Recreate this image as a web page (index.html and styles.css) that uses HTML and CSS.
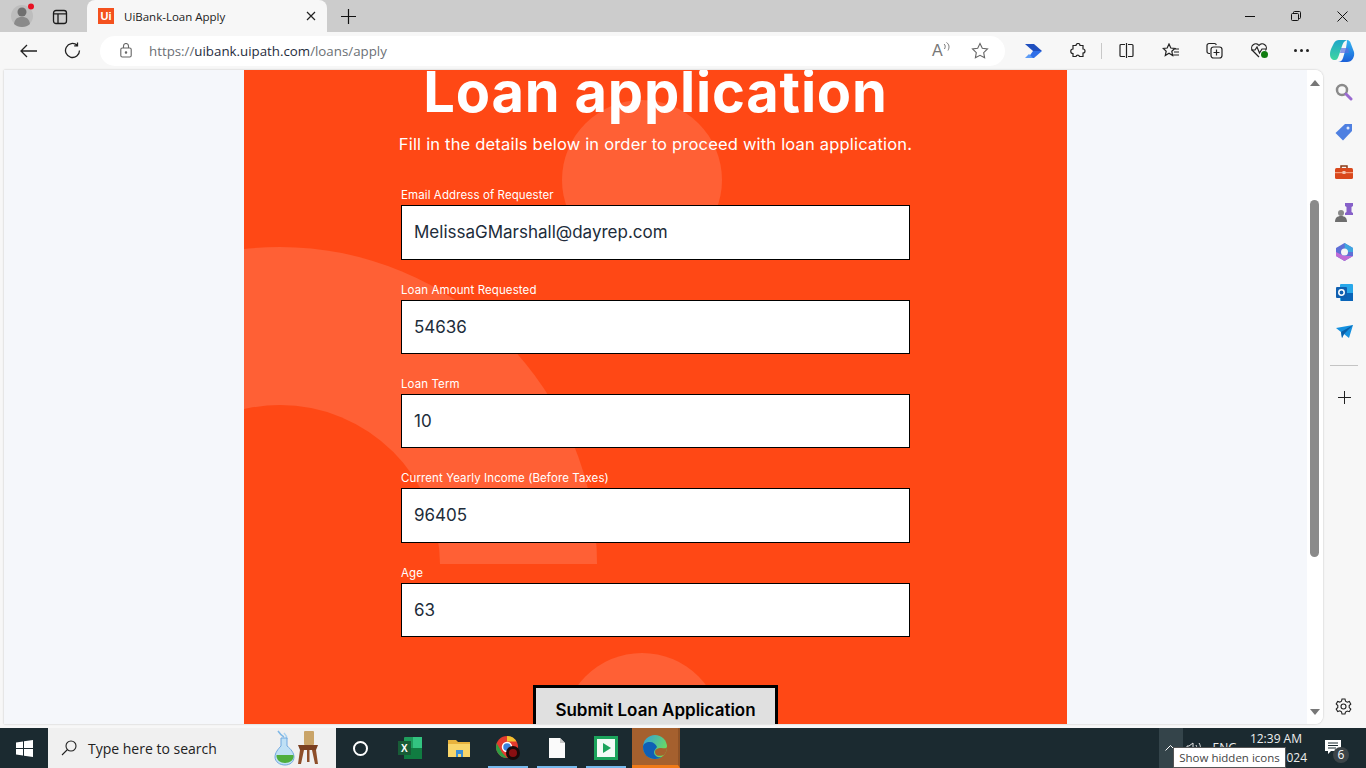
FILE: index.html
```html
<!DOCTYPE html>
<html lang="en">
<head>
  <meta charset="UTF-8">
  <meta name="viewport" content="width=device-width, initial-scale=1.0">
  <title>UiBank-Loan Apply</title>
  <link rel="stylesheet" href="styles.css">
</head>
<body>
  <!-- tab strip -->
  <div class="tabstrip">
    <div class="avatar">
      <svg width="26" height="26" viewBox="0 0 26 26"><circle cx="11" cy="13" r="11" fill="#bdbdbd"/><circle cx="11" cy="9" r="4.500" fill="#707070"/><path d="M3 21c1-6 4-7 8-7s7 1 8 7c-2 2-5 3-8 3s-6-1-8-3z" fill="#8a8a8a"/><circle cx="20" cy="3.500" r="3" fill="#e81123"/></svg>
    </div>
    <div class="tab-actions">
      <svg width="16" height="16" viewBox="0 0 16 16" fill="none" stroke="#1a1a1a" stroke-width="1.300"><rect x="1.500" y="1.500" width="13" height="13" rx="2.500"/><path d="M1.500 4.800h13M6 4.800v9.700"/></svg>
    </div>
    <div class="tab">
      <span class="tab-logo">Ui</span>
      <span class="tab-title">UiBank-Loan Apply</span>
      <svg width="10" height="10" viewBox="0 0 10 10" stroke="#222" stroke-width="1.200"><path d="M1 1l8 8M9 1l-8 8"/></svg>
    </div>
    <svg class="new-tab" width="15" height="15" viewBox="0 0 15 15" stroke="#111" stroke-width="1.200"><path d="M7.500 0v15M0 7.500h15"/></svg>
    <div class="window-btns">
      <svg width="10" height="10" viewBox="0 0 10 10" stroke="#111"><path d="M0 5.500h10"/></svg>
      <svg width="10" height="10" viewBox="0 0 10 10" fill="none" stroke="#111"><rect x="0.500" y="2.500" width="7" height="7" rx="1"/><path d="M2.500 2.500v-1a1 1 0 0 1 1-1h5a1 1 0 0 1 1 1v5a1 1 0 0 1-1 1h-1"/></svg>
      <svg width="11" height="11" viewBox="0 0 11 11" stroke="#111"><path d="M0.500 0.500l10 10M10.500 0.500l-10 10"/></svg>
    </div>
  </div>

  <!-- address bar -->
  <div class="toolbar">
    <svg class="nav-back" width="17" height="14" viewBox="0 0 17 14" fill="none" stroke="#222" stroke-width="1.300"><path d="M17 7H1M7 1L1 7l6 6"/></svg>
    <svg class="nav-reload" width="17" height="17" viewBox="0 0 17 17" fill="none" stroke="#222" stroke-width="1.300"><path d="M15.500 8.500a7 7 0 1 1-2.300-5.200M13.500 0.500v3.300h-3.300"/></svg>
    <div class="addressbar">
      <svg width="12" height="15" viewBox="0 0 12 15" fill="none" stroke="#666" stroke-width="1.100"><rect x="0.800" y="5" width="10.400" height="9" rx="1.500"/><path d="M3.500 5V3a2.500 2.500 0 0 1 5 0v2"/><circle cx="6" cy="9.500" r="0.700" fill="#666"/></svg>
      <span class="url"><span class="url-dim">https://</span>uibank.uipath.com<span class="url-dim">/loans/apply</span></span>
      <span class="read-aloud">A<svg width="7" height="9" viewBox="0 0 7 9" fill="none" stroke="#777"><path d="M1 2c1.500 1 1.500 3 .5 5M3.500 0.500c3 2 3 5 1.500 8"/></svg></span>
      <svg width="18" height="18" viewBox="0 0 18 18" fill="none" stroke="#666" stroke-width="1.100"><path d="M9 1.500l2.300 4.800 5.200.7-3.800 3.600.9 5.200L9 13.300l-4.600 2.500.9-5.200L1.500 7l5.200-.7z"/></svg>
    </div>
    <div class="toolbar-icons">
      <svg class="ti-automate" width="17" height="14" viewBox="0 0 17 14"><path d="M3 14l5-7h9l-8 7z" fill="#2f6fe8"/><path d="M8 7L0 0h9l8 7z" fill="#1f4fbf"/><path d="M0 14l4-4 4 4z" fill="#5c9bf5"/></svg>
      <svg class="ti-ext" width="16" height="16" viewBox="0 0 16 16" fill="none" stroke="#222" stroke-width="1.200"><path d="M6 2.500a2 2 0 0 1 4 0h3v3.500a2 2 0 0 1 0 4v3.500H9.500a1.800 1.800 0 0 0-3.500 0H3v-3a2 2 0 0 1 0-4.500v-3.500z"/></svg>
      <span class="ti-sep"></span>
      <svg class="ti-split" width="15" height="15" viewBox="0 0 15 15" fill="none" stroke="#222" stroke-width="1.200"><path d="M6 1.500H2a1 1 0 0 0-1 1v10a1 1 0 0 0 1 1h4M9 1.500h4a1 1 0 0 1 1 1v10a1 1 0 0 1-1 1H9M7.500 0v15"/></svg>
      <svg class="ti-favs" width="17" height="16" viewBox="0 0 17 16" fill="none" stroke="#222" stroke-width="1.200"><path d="M7 1l1.800 4 4 .4-3 2.800.8 4.300L7 10.300l-3.700 2.200.9-4.300-3-2.800 4-.4zM12 6h5M12 9h5M11 12h6"/></svg>
      <svg class="ti-coll" width="17" height="17" viewBox="0 0 17 17" fill="none" stroke="#222" stroke-width="1.200"><path d="M4 11.500H3a2 2 0 0 1-2-2V3.500a2 2 0 0 1 2-2h5.500a2 2 0 0 1 1.800 1.500"/><rect x="5" y="5" width="11" height="11" rx="2.500"/><path d="M10.500 7.500v6M7.500 10.500h6"/></svg>
      <svg class="ti-health" width="19" height="17" viewBox="0 0 19 17" fill="none" stroke="#222" stroke-width="1.200"><path d="M9 15L2.500 8.500a4 4 0 0 1 6.500-5 4 4 0 0 1 6.500 5"/><path d="M1 8h4l2-3 2.500 6L12 7h4"/><circle cx="14.500" cy="12.500" r="3.500" fill="#107c10" stroke="none"/></svg>
      <span class="ti-more"><i></i><i></i><i></i></span>
      <svg class="ti-copilot" width="25" height="24" viewBox="0 0 25 24">
        <defs>
          <linearGradient id="copilotA" x1="0" y1="0" x2="0" y2="1"><stop offset="0" stop-color="#1fa6c9"/><stop offset="1" stop-color="#3ed6a0"/></linearGradient>
          <linearGradient id="copilotB" x1="0" y1="0" x2="0" y2="1"><stop offset="0" stop-color="#35b6f2"/><stop offset="1" stop-color="#1a5fd8"/></linearGradient>
        </defs>
        <path d="M9 1h8c-3 1-4 3-5 6l-3 9c-1 3-2 5-4 5-3 0-5-2-5-6 0-3 1-5 2-7l2-4c1-2 3-3 5-3z" fill="url(#copilotA)"/>
        <path d="M17 1c2 0 3 1 4 4l3 8c1 5-2 10-7 10H8c2 0 4-1 5-4l3-10c.5-3 1-6 1-8z" fill="url(#copilotB)"/>
        <path d="M11 9h7l1 5h-9z" fill="#5a6fe0" opacity="0.700"/>
      </svg>
    </div>
  </div>

  <!-- browser content + edge sidebar -->
  <div class="browser">
    <div class="viewport">
      <div class="page">
        <div class="panel">
          <div class="deco deco-circle-top"></div>
          <div class="deco-arch"><div class="deco-ring"></div></div>
          <div class="deco deco-circle-bottom"></div>

          <div class="panel-inner">
            <h1>Loan application</h1>
            <p class="lead">Fill in the details below in order to proceed with loan application.</p>

            <form class="loan-form">
              <label for="email">Email Address of Requester</label>
              <input type="text" id="email" class="tall" value="MelissaGMarshall@dayrep.com">

              <label for="amount">Loan Amount Requested</label>
              <input type="text" id="amount" value="54636">

              <label for="term">Loan Term</label>
              <input type="text" id="term" value="10">

              <label for="income">Current Yearly Income (Before Taxes)</label>
              <input type="text" id="income" class="tall" value="96405">

              <label for="age">Age</label>
              <input type="text" id="age" value="63">

              <button type="button">Submit Loan Application</button>
            </form>
          </div>
        </div>
      </div>
      <div class="scrollbar">
        <span class="arrow-up"></span>
        <span class="thumb"></span>
        <span class="arrow-down"></span>
      </div>
    </div>

    <div class="sidebar">
      <div class="side-item"><svg width="18" height="18" viewBox="0 0 18 18" fill="none"><circle cx="7" cy="7" r="5" stroke="#8a8a8a" stroke-width="2.500"/><path d="M11 11l5 5" stroke="#9a6ad0" stroke-width="3" stroke-linecap="round"/></svg></div>
      <div class="side-item"><svg width="18" height="18" viewBox="0 0 18 18"><path d="M10 1h7v7l-9 9.500L0.500 10z" fill="#4f80e1"/><circle cx="13" cy="5" r="1.500" fill="#dfe8fa"/></svg></div>
      <div class="side-item"><svg width="18" height="14" viewBox="0 0 18 14"><path d="M6 3V1h6v2" fill="none" stroke="#8a3a16" stroke-width="1.500"/><rect y="3" width="18" height="11" rx="1.500" fill="#d9481c"/><rect y="7" width="18" height="1.200" fill="#f4a080"/><rect x="7.500" y="6" width="3" height="3" fill="#f3c3ae"/></svg></div>
      <div class="side-item"><svg width="18" height="19" viewBox="0 0 18 19"><circle cx="6" cy="10" r="3" fill="#8a8a8a"/><path d="M0 19c0-4 2-6 6-6s6 2 6 6z" fill="#6e6e6e"/><path d="M10 0h8v3l-1.500 1v5l1.500 1v2h-8v-2l1.500-1V4L10 3z" fill="#8761c9"/></svg></div>
      <div class="side-item"><svg width="17" height="18" viewBox="0 0 17 18"><path d="M8.500 0L17 5v8l-8.500 5L0 13V5z" fill="#5f6fd6"/><path d="M8.500 0L17 5v4H9z" fill="#3fa6e0"/><path d="M0 9l8 4h9l-8.500 5L0 13z" fill="#c06bd6"/><circle cx="8.500" cy="9" r="3.500" fill="#f5f5f5"/></svg></div>
      <div class="side-item"><svg width="17" height="17" viewBox="0 0 17 17"><rect x="4" y="0" width="13" height="17" rx="1" fill="#28a8ea"/><path d="M5 9h12v8H5z" fill="#0a64b8"/><rect x="0" y="3" width="11" height="11" rx="1" fill="#0f5fb0"/><circle cx="5.500" cy="8.500" r="2.700" fill="none" stroke="#fff" stroke-width="1.500"/></svg></div>
      <div class="side-item"><svg width="17" height="14" viewBox="0 0 17 14"><path d="M0 3l17-3-4 13-5-4-2 4-1-6z" fill="#1490df"/><path d="M5 7l12-7-9 9-2 4z" fill="#0a5ea8"/></svg></div>
      <span class="side-sep"></span>
      <div class="side-item side-add"><svg width="13" height="13" viewBox="0 0 13 13" stroke="#222"><path d="M6.500 0v13M0 6.500h13"/></svg></div>
      <svg class="side-gear" width="17" height="17" viewBox="0 0 17 17" fill="none" stroke="#222" stroke-width="1.100"><circle cx="8.500" cy="8.500" r="2.500"/><path d="M7 1h3l.5 2.200 1.700 1 2.100-.7 1.500 2.600-1.600 1.500v2l1.600 1.500-1.500 2.600-2.100-.7-1.700 1L10 16H7l-.5-2.200-1.700-1-2.100.7L1.200 11l1.600-1.500v-2L1.200 6l1.500-2.600 2.100.7 1.700-1z"/></svg>
    </div>
  </div>

  <!-- windows taskbar -->
  <div class="taskbar">
    <div class="start">
      <svg width="17" height="17" viewBox="0 0 17 17" fill="#fff"><path d="M0 2.500l7-1V8H0zM8 1.300L17 0v8H8zM0 9h7v6.500l-7-1zM8 9h9v8l-9-1.300z"/></svg>
    </div>
    <div class="search">
      <svg width="16" height="16" viewBox="0 0 16 16" fill="none" stroke="#222" stroke-width="1.100"><circle cx="10" cy="6" r="5"/><path d="M6.500 9.500L1 15"/></svg>
      <span>Type here to search</span>
      <svg class="search-art" width="44" height="36" viewBox="0 0 44 36">
        <path d="M4 1c2 3 4 5 6 6" fill="none" stroke="#7fb8e6" stroke-width="1.500"/>
        <path d="M10 3c2 2 3 3 3 6" fill="none" stroke="#a9d2f0" stroke-width="1.500"/>
        <path d="M7 8h6v8c4 3 7 7 7 11 0 5-4 8-9 8s-10-3-10-8c0-4 3-8 6-11z" fill="#bfe0f5" stroke="#6fa8e0"/>
        <path d="M2.500 25h17c1 5-4 8-8.500 8s-9-3-8.500-8z" fill="#4fae3e"/>
        <rect x="30" y="1" width="10" height="14" rx="1" fill="#c9a468"/>
        <path d="M24 15h20l-2 5H26z" fill="#7a3f20"/>
        <path d="M26 20h4l-3 14h-3zM38 20h4l2 14h-3zM33 20h2.500v12H33z" fill="#8e4f2a"/>
      </svg>
    </div>
    <div class="task-icons">
      <div class="task-item"><span class="cortana"></span></div>
      <div class="task-item">
        <svg width="24" height="22" viewBox="0 0 24 22"><rect x="6" width="18" height="22" rx="1" fill="#1f9d5c"/><rect x="15" y="0" width="9" height="11" fill="#33c481"/><rect x="6" y="11" width="18" height="11" fill="#107c41"/><rect y="4" width="13" height="14" fill="#185c37"/><text x="3" y="15" class="excel-x">X</text></svg>
      </div>
      <div class="task-item">
        <svg width="22" height="20" viewBox="0 0 22 20"><path d="M0 2h8l2 2h12v14H0z" fill="#e8b33d"/><path d="M0 6h22v13H0z" fill="#f9d66a"/><path d="M8 12h7v7h-2v-3h-3v3H8z" fill="#3c8fd6"/></svg>
      </div>
      <div class="task-item open">
        <svg width="24" height="24" viewBox="0 0 24 24"><circle cx="11" cy="11" r="11" fill="#e33b2e"/><path d="M11 0a11 11 0 0 1 9.500 5.500H11z" fill="#f3c12f"/><path d="M0.500 7L6 16.500 11 22C5 22 0 17 0 11z" fill="#2f9e44"/><circle cx="11" cy="11" r="4.500" fill="#3b82dc" stroke="#fff" stroke-width="1.500"/><circle cx="17" cy="17" r="7" fill="#1a0a0a"/><circle cx="17" cy="17" r="4" fill="#8a0f12"/></svg>
      </div>
      <div class="task-item open">
        <svg width="16" height="20" viewBox="0 0 16 20"><path d="M0 0h11l5 5v15H0z" fill="#fafafa"/><path d="M11 0l5 5h-5z" fill="#c8c8c8"/></svg>
      </div>
      <div class="task-item open">
        <svg width="24" height="24" viewBox="0 0 24 24"><rect width="24" height="24" fill="#1ca45c"/><rect x="3" y="3" width="18" height="18" fill="#f4fbf6"/><path d="M9 7l8 5-8 5z" fill="#1ca45c"/></svg>
      </div>
      <div class="task-item active">
        <svg width="24" height="24" viewBox="0 0 24 24">
          <defs>
            <linearGradient id="edgeTop" x1="0" y1="0" x2="1" y2="0.600"><stop offset="0" stop-color="#2f9fe0"/><stop offset="1" stop-color="#6fdc5a"/></linearGradient>
          </defs>
          <circle cx="12" cy="12" r="12" fill="url(#edgeTop)"/>
          <path d="M0 12c0 7 5 12 12 12 3 0 5-1 7-2-4 1-8-1-8-5 0-2 2-3 3-5-1-3-4-5-7-5-4 0-7 2-7 5z" fill="#0f5fb5"/>
          <path d="M12 17c0-3 3-4 6-4 3 0 5 1 6-1 0 3-1 6-3 8-2 1-9 2-9-3z" fill="#a5602e"/>
        </svg>
      </div>
    </div>
    <div class="tray">
      <div class="tray-chevron">
        <svg width="11" height="6" viewBox="0 0 11 6" fill="none" stroke="#fff"><path d="M0.500 5.500l5-5 5 5"/></svg>
      </div>
      <svg class="tray-volume" width="17" height="14" viewBox="0 0 17 14" fill="none" stroke="#e5e5e5"><path d="M1 5v4h2l4 3V2L3 5zM10 4c1 2 1 4 0 6M13 2c2 3 2 7 0 10"/></svg>
      <span class="tray-lang">ENG</span>
      <div class="clock"><span class="clock-time">12:39 AM</span><span>2024</span></div>
      <div class="notify">
        <svg width="17" height="14" viewBox="0 0 17 14"><path d="M0 0h16v11H6l-3 3v-3H0z" fill="#fff"/><path d="M3 3h10M3 5.500h10M3 8h8" stroke="#1b2a30"/></svg>
        <span class="notify-count">6</span>
      </div>
    </div>
    <div class="tooltip">Show hidden icons</div>
  </div>
</body>
</html>
```

FILE: styles.css
```css
* { box-sizing: border-box; }
html, body {
  height: 768px;
  overflow: hidden;
}
body {
  margin: 0;
  display: flex;
  flex-direction: column;
  font-family: 'Open Sans', sans-serif;
  background-color: #f7f7f7;
}

/* tab strip */
.tabstrip {
  height: 32px;
  flex: none;
  display: flex;
  align-items: center;
  padding-left: 11px;
  background-color: #cccccc;
}
.avatar {
  width: 26px;
  height: 26px;
}
.tab-actions {
  margin-left: 15px;
  width: 16px;
  height: 16px;
}
.tab {
  margin-left: 19px;
  align-self: flex-end;
  width: 240px;
  height: 32px;
  display: flex;
  align-items: center;
  padding: 0 11px;
  background-color: #f7f7f7;
  border-radius: 8px 8px 0 0;
}
.tab-logo {
  width: 16px;
  height: 16px;
  flex: none;
  display: flex;
  align-items: center;
  justify-content: center;
  background-color: #f4511e;
  color: #fff;
  font: 700 11px 'Liberation Sans', sans-serif;
}
.tab-title {
  flex: 1;
  margin-left: 10px;
  font-size: 11.500px;
  color: #222;
}
.new-tab {
  margin-left: 14px;
}
.window-btns {
  margin-left: auto;
  display: flex;
  align-items: center;
  gap: 36px;
  padding-right: 18px;
}

/* address bar */
.toolbar {
  height: 38px;
  flex: none;
  display: flex;
  align-items: center;
  padding-bottom: 1px;
  background-color: #f7f7f7;
}
.nav-back {
  margin-left: 20px;
}
.nav-reload {
  margin-left: 27px;
}
.addressbar {
  flex: none;
  margin-left: 19px;
  width: 905px;
  height: 30px;
  display: flex;
  align-items: center;
  padding: 0 16px 0 20px;
  background-color: #fff;
  border-radius: 15px;
}
.url {
  flex: 1;
  margin-left: 17px;
  font-size: 13.300px;
  color: #1f2d3d;
}
.url-dim {
  color: #6b7075;
}
.read-aloud {
  display: flex;
  align-items: flex-start;
  width: 39px;
  font-size: 16px;
  color: #777;
  font-family: 'Liberation Sans', sans-serif;
}
.toolbar-icons {
  display: flex;
  align-items: center;
}
.ti-automate { margin-left: 20px; }
.ti-ext { margin-left: 28px; }
.ti-sep {
  width: 1px;
  height: 16px;
  margin-left: 15px;
  background-color: #c8c8c8;
}
.ti-split { margin-left: 17px; }
.ti-favs { margin-left: 28px; }
.ti-coll { margin-left: 27px; }
.ti-health { margin-left: 27px; }
.ti-more {
  display: flex;
  gap: 3px;
  margin-left: 25px;
}
.ti-more i {
  width: 3px;
  height: 3px;
  border-radius: 50%;
  background-color: #222;
}
.ti-copilot { margin-left: 21px; }

/* browser content */
.browser {
  height: 658px;
  flex: none;
  display: flex;
  background-color: #f7f7f7;
}
.viewport {
  width: 1319px;
  height: 654px;
  margin-left: 4px;
  display: flex;
  overflow: hidden;
  background-color: #fff;
  border-radius: 0 8px 8px 0;
  box-shadow: 0 0 2px rgba(0,0,0,0.25);
}
.page {
  width: 1303px;
  overflow: hidden;
  padding-left: 240px;
  background-color: #f5f7fb;
}
.panel {
  position: relative;
  width: 823px;
  height: 700px;
  overflow: hidden;
  background-color: #ff4815;
}
.deco,
.deco-arch {
  position: absolute;
  background-color: #ff6035;
}
.deco {
  width: 160px;
  height: 160px;
  border-radius: 50%;
}
.deco-circle-top {
  left: 318px;
  top: 30px;
}
.deco-circle-bottom {
  left: 318px;
  top: 583px;
}
.deco-arch {
  left: -281px;
  top: 177px;
  width: 634px;
  height: 317px;
  border-radius: 317px 317px 0 0;
  overflow: hidden;
}
.deco-ring {
  position: absolute;
  left: 157px;
  top: 158px;
  width: 320px;
  height: 320px;
  border-radius: 50%;
  background-color: #ff4815;
}
.panel-inner {
  position: relative;
  text-align: center;
}
h1 {
  margin: 0;
  height: 45px;
  font-family: 'Inter', sans-serif;
  font-size: 56px;
  line-height: 45px;
  font-weight: 700;
  letter-spacing: 0.800px;
  color: #fff;
}
.lead {
  margin: 19px 0 0;
  font-family: 'Inter', sans-serif;
  font-size: 16.500px;
  line-height: 20px;
  letter-spacing: 0.190px;
  color: #fff;
}
.loan-form {
  width: 509px;
  margin: 33px auto 0;
  display: flex;
  flex-direction: column;
  align-items: flex-start;
}
label {
  display: block;
  height: 16px;
  margin-top: 22px;
  margin-bottom: 2px;
  font-family: 'Inter', sans-serif;
  font-size: 11.500px;
  line-height: 16px;
  letter-spacing: 0.100px;
  color: #fff;
}
label:first-child {
  margin-top: 0;
}
input {
  width: 509px;
  height: 54px;
  padding: 0 12px;
  font-family: 'Inter', sans-serif;
  font-size: 17px;
  color: #212c3a;
  background-color: #fff;
  border: 1px solid #000;
  border-radius: 0;
}
input.tall {
  height: 55px;
  padding-bottom: 1px;
}
button {
  align-self: center;
  width: 245px;
  height: 60px;
  margin-top: 48px;
  flex: none;
  font-family: 'Inter', sans-serif;
  font-size: 17px;
  font-weight: 600;
  color: #000;
  background-color: #e0e0e0;
  border: 3px solid #000;
  padding: 0 0 11px;
}
.scrollbar {
  position: relative;
  width: 16px;
  background-color: #fff;
}
.arrow-up,
.arrow-down {
  position: absolute;
  left: 3px;
  width: 0;
  height: 0;
  border-left: 5px solid transparent;
  border-right: 5px solid transparent;
}
.arrow-up {
  top: 10px;
  border-bottom: 6px solid #777;
}
.arrow-down {
  bottom: 9px;
  border-top: 6px solid #777;
}
.thumb {
  position: absolute;
  left: 3px;
  top: 130px;
  width: 9px;
  height: 357px;
  background-color: #8a8a8a;
  border-radius: 5px;
}

/* edge sidebar */
.sidebar {
  position: relative;
  flex: 1;
  height: 654px;
  display: flex;
  flex-direction: column;
  align-items: center;
  padding: 2px 1px 0 0;
}
.side-item {
  height: 40px;
  flex: none;
  display: flex;
  align-items: center;
  justify-content: center;
}
.side-sep {
  width: 28px;
  height: 1px;
  flex: none;
  margin-top: 13px;
  background-color: #c4c4c4;
}
.side-add {
  margin-top: 11px;
}
.side-gear {
  position: absolute;
  left: 12px;
  bottom: 9px;
}

/* taskbar */
.taskbar {
  position: relative;
  height: 40px;
  flex: none;
  display: flex;
  background-color: #1b2a30;
}
.start {
  width: 48px;
  display: flex;
  align-items: center;
  justify-content: center;
}
.search {
  position: relative;
  width: 288px;
  display: flex;
  align-items: center;
  padding-left: 13px;
  background-color: #f0f0f0;
  font-size: 14px;
  color: #222;
}
.search span {
  margin-left: 11px;
}
.search-art {
  position: absolute;
  right: 18px;
  top: 2px;
}
.task-icons {
  display: flex;
}
.task-item {
  position: relative;
  width: 49px;
  height: 40px;
  display: flex;
  align-items: center;
  justify-content: center;
}
.task-item.open::after {
  content: '';
  position: absolute;
  left: 5px;
  right: 4px;
  bottom: 0;
  height: 2px;
  background-color: #76b9ed;
}
.task-item.active {
  width: 48px;
  margin-left: 2px;
  background-color: #a5602e;
  border-right: 2px solid #8f5226;
  border-bottom: 3px solid #f07a18;
}
.cortana {
  width: 15px;
  height: 15px;
  border: 2px solid #fff;
  border-radius: 50%;
}
.excel-x {
  font: 700 10px 'Liberation Sans', sans-serif;
  fill: #fff;
}
.tray {
  margin-left: auto;
  display: flex;
  align-items: center;
  color: #eee;
  font-size: 12px;
}
.tray-chevron {
  width: 24px;
  height: 40px;
  display: flex;
  align-items: center;
  justify-content: center;
  background-color: #34444a;
}
.tray-volume {
  margin-left: 3px;
}
.tray-lang {
  margin-left: 10px;
  margin-top: -2px;
}
.clock {
  display: flex;
  flex-direction: column;
  align-items: flex-end;
  margin-left: 8px;
  margin-top: -1px;
  gap: 2px;
  width: 62px;
}
.clock-time {
  margin-right: 5px;
}
.notify {
  position: relative;
  width: 41px;
  height: 40px;
  margin-left: 18px;
  padding-top: 12px;
}
.notify-count {
  position: absolute;
  left: 8px;
  top: 19px;
  width: 16px;
  height: 16px;
  border-radius: 50%;
  background-color: #3c4448;
  font-size: 12px;
  line-height: 16px;
  text-align: center;
  color: #fff;
}
.tooltip {
  position: absolute;
  left: 1173px;
  top: 19px;
  width: 113px;
  height: 21px;
  background-color: #fff;
  border: 1px solid #555;
  font-size: 11.500px;
  line-height: 19px;
  text-align: center;
  color: #444;
}
```
